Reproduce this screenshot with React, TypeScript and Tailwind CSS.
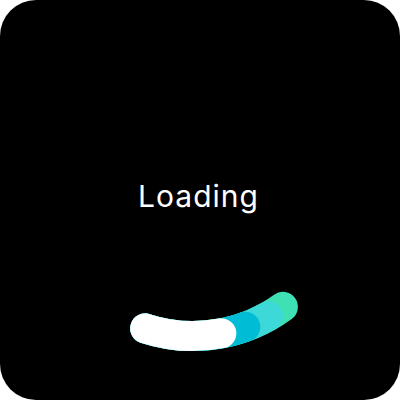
export default function App() {
  // arc segments share one circle: centre (193,183), r 153; drawn back to front
  const start = "M 145.2 328.4";
  const segments = [
    { end: "282.9 306.8", color: "#3FE0B4" },
    { end: "268.1 316.3", color: "#3DD8D8" },
    { end: "245.3 326.8", color: "#00BCD4" },
    { end: "221.4 333.3", color: "#FFFFFF" },
  ];

  return (
    <div className="w-[400px] h-[400px] bg-white">
      <div className="h-full rounded-[36px] bg-black flex flex-col items-center pt-[181px]">
        <p
          className="text-[30px] leading-[30px] tracking-[1px] text-white mr-[3px]"
          style={{ fontFamily: "Inter, 'Noto Sans', sans-serif" }}
        >
          Loading
        </p>
        <svg width="240" height="100" viewBox="80 270 240 100" className="mt-[59px]">
          {segments.map((s) => (
            <path
              key={s.color}
              d={`${start} A 153 153 0 0 0 ${s.end}`}
              fill="none"
              stroke={s.color}
              strokeWidth={30}
              strokeLinecap="round"
            />
          ))}
        </svg>
      </div>
    </div>
  );
}
